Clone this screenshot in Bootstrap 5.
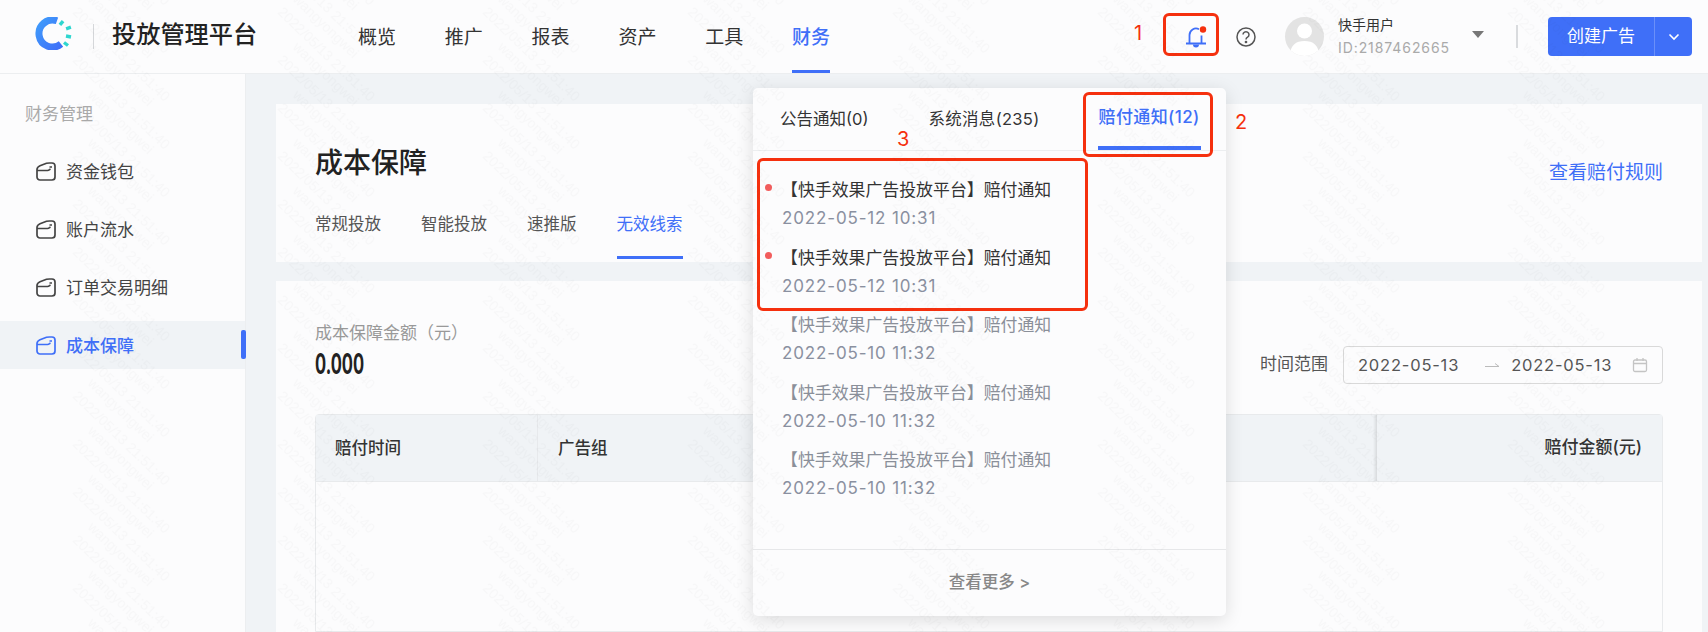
<!DOCTYPE html>
<html lang="zh-CN">
<head>
    <meta charset="UTF-8">
    <title>投放管理平台</title>
    <link href="https://cdn.jsdelivr.net/npm/bootstrap@5.3.0/dist/css/bootstrap.min.css" rel="stylesheet">
    <style>
        html, body { height: 632px; overflow: hidden; }
        body { font-family: Inter, "Noto Sans CJK SC", sans-serif; background: #f0f3f6; color: #333; font-size: 17px; position: relative; }
        .top-bar { height: 74px; background: #fcfcfd; border-bottom: 1px solid #eceef0; padding-left: 35px; }
        .logo-mark { margin-bottom: 6px; flex: none; }
        .logo-line { width: 1px; height: 25px; background: #d5d7da; margin: 0 18px 0 20px; }
        .app-title { font-size: 24.2px; font-weight: 500; color: #222; width: 246px; margin-bottom: 2px; }
        .top-nav { gap: 48.8px; height: 100%; }
        .top-nav a { font-size: 19px; color: #333; text-decoration: none; height: 100%; display: flex; align-items: center; width: 38px; white-space: nowrap; padding-top: 4px; }
        .top-nav a.on { color: #3f6ff8; font-weight: 500; border-bottom: 3px solid #3f6ff8; padding-top: 7px; }
        .right-bar { margin-left: auto; padding-right: 16px; height: 100%; }
        .bell-wrap { margin-right: 29px; }
        .face { width: 39px; height: 39px; border-radius: 50%; background: #e3e3e3; overflow: hidden; margin-left: 29px; margin-right: 14px; }
        .user-name { font-size: 14px; line-height: 20px; color: #333; margin-bottom: 3px; }
        .user-id { font-size: 14px; line-height: 20px; color: #aaa; letter-spacing: .92px; }
        .caret-down { width: 0; height: 0; border: 6px solid transparent; border-top: 7px solid #777; border-bottom: 0; margin-left: 22px; margin-bottom: 4px; }
        .bar-sep { width: 2px; height: 23px; background: #d9dbde; margin: 0 30px 0 32px; }
        .make-btn { height: 39px; background: #3f6ff8; border-radius: 4px; color: #fff; font-size: 17px; width: 144px; }
        .make-btn span { width: 106px; text-align: center; }
        .make-btn i { width: 38px; height: 100%; border-left: 1px solid #6a8ff9; display: flex; align-items: center; justify-content: center; }
        .page-wrap { height: 558px; }
        .side-col { width: 246px; background: #fcfcfd; flex: none; border-right: 1px solid #eceef0; padding-top: 30px; }
        .side-head { color: #aaa; font-size: 17px; padding-left: 25px; line-height: 20px; margin-bottom: 23px; }
        .side-item { height: 48px; margin-bottom: 10px; padding: 4px 0 0 36px; gap: 10px; color: #444; position: relative; }
        .side-item svg { margin-top: -4px; flex: none; }
        .side-item.on { background: #f0f3f6; color: #3f6ff8; font-weight: 500; }
        .side-item.on::after { content: ""; position: absolute; right: -1px; top: 9px; width: 5px; height: 29px; background: #3f6ff8; border-radius: 2px; }
        .main-col { padding: 30px 6px 0 30px; flex: 1; min-width: 0; overflow: hidden; }
        .head-box { background: #fcfcfd; height: 158px; padding: 0 39px; margin-bottom: 19px; position: relative; }
        .page-title { font-size: 28px; font-weight: 500; color: #222; line-height: 40px; padding-top: 39px; margin: 0; }
        .rule-link { color: #3f6ff8; font-size: 19px; text-decoration: none; position: absolute; right: 39px; top: 55px; }
        .sub-tabs { gap: 40px; margin-top: 29px; font-size: 16.5px; }
        .sub-tabs a { color: #555; text-decoration: none; height: 47px; line-height: 22px; padding-top: 1px; }
        .sub-tabs a.on { color: #3f6ff8; border-bottom: 3px solid #3f6ff8; }
        .data-box { background: #fcfcfd; height: 351px; padding: 41px 39px 0; }
        .amt-label { color: #999; line-height: 22px; }
        .amt-num { font-weight: 700; font-size: 28px; line-height: 36px; color: #222; margin-top: 2px; transform: scaleX(.59); transform-origin: left center; }
        .range-row { gap: 15px; color: #555; margin-bottom: -2px; }
        .range-box { width: 320px; height: 38px; border: 1px solid #d9d9d9; border-radius: 4px; padding: 0 14px; color: #555; letter-spacing: .8px; font-size: 16.5px; }
        .range-arrow { margin: 0 11px 0 25px; flex: none; }
        .range-cal { margin-left: auto; flex: none; }
        .grid-wrap { border: 1px solid #e8eaec; border-radius: 4px 4px 0 0; margin-top: 32px; height: 218px; }
        .grid-head { height: 67px; background: #f0f3f6; border-bottom: 1px solid #e8eaec; color: #333; font-weight: 500; font-size: 16.5px; }
        .cell-a { width: 222px; padding-left: 19px; border-right: 1px solid #e7e9ec; }
        .cell-b { flex: 1; padding-left: 20px; }
        .cell-c { width: 285px; padding-right: 20px; text-align: right; position: relative; font-size: 17px; }
        .cell-c::before { content: ""; position: absolute; left: -4px; top: 0; bottom: 0; width: 4px; background: linear-gradient(to right, rgba(0,0,0,0), rgba(0,0,0,.1)); }
        .notice-pop { position: absolute; left: 753px; top: 88px; width: 473px; height: 528px; background: #fcfcfd; border-radius: 5px; box-shadow: 0 4px 18px rgba(0,0,0,.13); z-index: 5; }
        .pop-tabs { height: 63px; border-bottom: 1px solid #eceef0; padding-left: 27px; font-size: 16.5px; color: #333; }
        .pop-tabs span { padding-top: 20px; height: 62px; line-height: 22px; white-space: nowrap; }
        .pop-tabs .t2 { margin-left: 60px; letter-spacing: .3px; }
        .pop-tabs .t3 { margin-left: 59px; color: #3f6ff8; font-weight: 500; border-bottom: 4px solid #3f6ff8; padding-top: 18px; font-size: 17px; letter-spacing: .4px; width: 103px; }
        .pop-list { padding: 23px 0 0 28px; height: 398px; }
        .msg-row { height: 67.6px; position: relative; }
        .msg-row .m-title { color: #8a8f99; font-size: 16.9px; line-height: 24px; padding-top: 4px; white-space: nowrap; }
        .msg-row .m-time { color: #8a90a0; font-size: 17px; letter-spacing: .85px; line-height: 24px; padding-top: 4px; margin-left: 1px; }
        .msg-row.fresh .m-title { color: #333; }
        .msg-row.fresh::before { content: ""; position: absolute; left: -16px; top: 10px; width: 7px; height: 7px; border-radius: 50%; background: #f25d5d; }
        .pop-foot { height: 66px; border-top: 1px solid #e6e7e9; color: #888; font-weight: 500; font-size: 16.5px; }
        .red-box { position: absolute; border: 3px solid #f5300e; border-radius: 6px; z-index: 6; }
        .red-num { position: absolute; color: #f5300e; font-size: 20px; line-height: 24px; z-index: 6; }
        .wm-layer { position: absolute; left: 0; top: 0; width: 1708px; height: 632px; pointer-events: none; z-index: 9; }
        .wm-layer text { font-family: "Liberation Sans", sans-serif; font-size: 14px; fill: rgba(0,0,0,.018); }
    </style>
</head>
<body>
    <header class="top-bar d-flex align-items-center">
        <svg class="logo-mark" width="38" height="33" viewBox="0 0 38 33">
            <defs><linearGradient id="lg" x1="0" y1="0" x2="1" y2="1"><stop offset="0" stop-color="#3f9bfb"/><stop offset="1" stop-color="#3f6ff8"/></linearGradient></defs>
            <path d="M22 3.800A13.500 13.500 0 1 0 26 27" fill="none" stroke="url(#lg)" stroke-width="7"/>
            <path d="M24.900 7.900L28.100 4.100M31.100 11.800L35.900 10.200M31 19L36 20M29 25.500L33 28.500" fill="none" stroke="#2fd6cf" stroke-width="3.400"/>
        </svg>
        <div class="logo-line"></div>
        <div class="app-title">投放管理平台</div>
        <nav class="top-nav d-flex">
            <a href="#">概览</a><a href="#">推广</a><a href="#">报表</a><a href="#">资产</a><a href="#">工具</a><a href="#" class="on">财务</a>
        </nav>
        <div class="right-bar d-flex align-items-center">
            <svg class="bell-wrap" width="22" height="24" viewBox="0 0 22 24" fill="none" stroke="#3f6ff8" stroke-width="1.800">
                <path d="M4.500 18V10a6.500 6.500 0 0 1 9.500-5.800M16.500 10.500V18M1 18.500h20"/>
                <path d="M8 19.500h6a3 3 0 0 1-6 0z" fill="#3f6ff8" stroke="none"/>
                <circle cx="18" cy="4.500" r="3.200" fill="#f5300e" stroke="none"/>
            </svg>
            <svg width="20" height="20" viewBox="0 0 20 20" fill="none" stroke="#555" stroke-width="1.500">
                <circle cx="10" cy="10" r="9"/>
                <path d="M7 7.600a3 3 0 1 1 4.600 2.600c-1 .6-1.600 1.200-1.600 2.400"/>
                <circle cx="10" cy="15" r=".6" fill="#555"/>
            </svg>
            <div class="face">
                <svg width="39" height="39" viewBox="0 0 39 39"><circle cx="19.500" cy="14" r="7.500" fill="#fff"/><path d="M5 39c0-11 6-15 14.500-15S34 28 34 39z" fill="#fff"/></svg>
            </div>
            <div>
                <div class="user-name">快手用户</div>
                <div class="user-id">ID:2187462665</div>
            </div>
            <div class="caret-down"></div>
            <div class="bar-sep"></div>
            <div class="make-btn d-flex align-items-center">
                <span>创建广告</span>
                <i><svg width="12" height="8" viewBox="0 0 12 8" fill="none" stroke="#fff" stroke-width="1.600"><path d="M1.500 1.500L6 6l4.500-4.500"/></svg></i>
            </div>
        </div>
    </header>

    <div class="page-wrap d-flex">
        <aside class="side-col">
            <div class="side-head">财务管理</div>
            <div class="side-item d-flex align-items-center"><svg width="20" height="19" viewBox="0 0 20 19" fill="none" stroke="currentColor" stroke-width="1.700"><path d="M1 7.500C1 5.500 2.500 4.500 4 3.800L10.500 1.300C11.500 1 12.500 1 13.500 1H16a3 3 0 0 1 3 3v11a3 3 0 0 1-3 3H4a3 3 0 0 1-3-3z"/><path d="M1 8.500h10.500c1.500 0 2-1 3-1.500M13.500 5h2.500"/></svg>资金钱包</div>
            <div class="side-item d-flex align-items-center"><svg width="20" height="19" viewBox="0 0 20 19" fill="none" stroke="currentColor" stroke-width="1.700"><path d="M1 7.500C1 5.500 2.500 4.500 4 3.800L10.500 1.300C11.500 1 12.500 1 13.500 1H16a3 3 0 0 1 3 3v11a3 3 0 0 1-3 3H4a3 3 0 0 1-3-3z"/><path d="M1 8.500h10.500c1.500 0 2-1 3-1.500M13.500 5h2.500"/></svg>账户流水</div>
            <div class="side-item d-flex align-items-center"><svg width="20" height="19" viewBox="0 0 20 19" fill="none" stroke="currentColor" stroke-width="1.700"><path d="M1 7.500C1 5.500 2.500 4.500 4 3.800L10.500 1.300C11.500 1 12.500 1 13.500 1H16a3 3 0 0 1 3 3v11a3 3 0 0 1-3 3H4a3 3 0 0 1-3-3z"/><path d="M1 8.500h10.500c1.500 0 2-1 3-1.500M13.500 5h2.500"/></svg>订单交易明细</div>
            <div class="side-item on d-flex align-items-center"><svg width="20" height="19" viewBox="0 0 20 19" fill="none" stroke="currentColor" stroke-width="1.700"><path d="M1 7.500C1 5.500 2.500 4.500 4 3.800L10.500 1.300C11.500 1 12.500 1 13.500 1H16a3 3 0 0 1 3 3v11a3 3 0 0 1-3 3H4a3 3 0 0 1-3-3z"/><path d="M1 8.500h10.500c1.500 0 2-1 3-1.500M13.500 5h2.500"/></svg>成本保障</div>
        </aside>

        <main class="main-col">
            <section class="head-box">
                <h1 class="page-title">成本保障</h1>
                <a href="#" class="rule-link">查看赔付规则</a>
                <div class="sub-tabs d-flex">
                    <a href="#">常规投放</a><a href="#">智能投放</a><a href="#">速推版</a><a href="#" class="on">无效线索</a>
                </div>
            </section>
            <section class="data-box">
                <div class="d-flex justify-content-between align-items-end">
                    <div>
                        <div class="amt-label">成本保障金额（元）</div>
                        <div class="amt-num">0.000</div>
                    </div>
                    <div class="range-row d-flex align-items-center">
                        <span>时间范围</span>
                        <div class="range-box d-flex align-items-center">
                            <span>2022-05-13</span>
                            <svg class="range-arrow" width="16" height="6" viewBox="0 0 16 6" fill="none" stroke="#bbb" stroke-width="1"><path d="M1 4.500h14L11 1.500"/></svg>
                            <span>2022-05-13</span>
                            <svg class="range-cal" width="16" height="16" viewBox="0 0 16 16" fill="none" stroke="#c4c4c4" stroke-width="1.300"><rect x="1.500" y="3" width="13" height="11.500" rx="1.500"/><path d="M1.500 6.500h13M5 1v3M11 1v3"/></svg>
                        </div>
                    </div>
                </div>
                <div class="grid-wrap">
                    <div class="grid-head d-flex align-items-stretch">
                        <div class="cell-a d-flex align-items-center">赔付时间</div>
                        <div class="cell-b d-flex align-items-center">广告组</div>
                        <div class="cell-c d-flex align-items-center justify-content-end">赔付金额(元)</div>
                    </div>
                </div>
            </section>
        </main>
    </div>

    <div class="notice-pop">
        <div class="pop-tabs d-flex">
            <span>公告通知(0)</span>
            <span class="t2">系统消息(235)</span>
            <span class="t3">赔付通知(12)</span>
        </div>
        <div class="pop-list">
            <div class="msg-row fresh"><div class="m-title">【快手效果广告投放平台】赔付通知</div><div class="m-time">2022-05-12 10:31</div></div>
            <div class="msg-row fresh"><div class="m-title">【快手效果广告投放平台】赔付通知</div><div class="m-time">2022-05-12 10:31</div></div>
            <div class="msg-row"><div class="m-title">【快手效果广告投放平台】赔付通知</div><div class="m-time">2022-05-10 11:32</div></div>
            <div class="msg-row"><div class="m-title">【快手效果广告投放平台】赔付通知</div><div class="m-time">2022-05-10 11:32</div></div>
            <div class="msg-row"><div class="m-title">【快手效果广告投放平台】赔付通知</div><div class="m-time">2022-05-10 11:32</div></div>
        </div>
        <div class="pop-foot d-flex align-items-center justify-content-center">查看更多 &gt;</div>
    </div>

    <div class="red-box" style="left:1163px;top:13px;width:56px;height:43px"></div>
    <div class="red-box" style="left:1083px;top:92px;width:130px;height:65px"></div>
    <div class="red-box" style="left:757px;top:158px;width:331px;height:153px"></div>
    <span class="red-num" style="left:1134px;top:21px">1</span>
    <span class="red-num" style="left:1235px;top:110px">2</span>
    <span class="red-num" style="left:897px;top:127px">3</span>

    <svg class="wm-layer" aria-hidden="true">
        <defs>
            <pattern id="wm" width="205" height="48" patternUnits="userSpaceOnUse">
                <text transform="translate(72 61) rotate(44)">2022/05/13 21:51:40</text>
                <text transform="translate(72 13) rotate(44)">2022/05/13 21:51:40</text>
                <text transform="translate(72 -35) rotate(44)">2022/05/13 21:51:40</text>
                <text transform="translate(72 -83) rotate(44)">2022/05/13 21:51:40</text>
                <text transform="translate(87 48) rotate(44)">wangyongwei</text>
                <text transform="translate(87 0) rotate(44)">wangyongwei</text>
                <text transform="translate(87 -48) rotate(44)">wangyongwei</text>
            </pattern>
        </defs>
        <rect width="1708" height="632" fill="url(#wm)"/>
    </svg>
    <script src="https://cdn.jsdelivr.net/npm/bootstrap@5.3.0/dist/js/bootstrap.bundle.min.js"></script>
</body>
</html>
